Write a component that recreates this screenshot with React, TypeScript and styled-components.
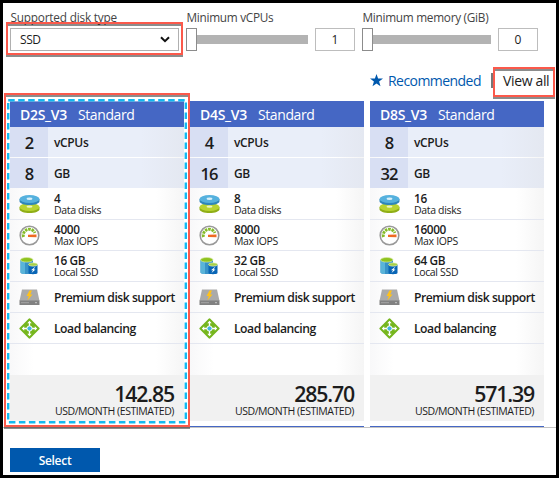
import React from "react";
import styled, { createGlobalStyle } from "styled-components";

const Global = createGlobalStyle`
  * { box-sizing: border-box; }
  body { margin: 0; background: #fff; }
`;

const Page = styled.div`
  position: relative;
  width: 559px;
  height: 478px;
  border: 3px solid #000;
  background: #fff;
  color: #1c1c1c;
  font-family: "Open Sans", "Noto Sans", sans-serif;
  display: flex;
  flex-direction: column;
  overflow: hidden;
  white-space: nowrap;
`;

const Filters = styled.div`
  display: flex;
  gap: 7px;
  padding: 5px 0 0 7px;
  height: 48px;
  flex: none;
`;

const Field = styled.div<{ $width: number }>`
  width: ${(p) => p.$width}px;
  flex: none;
`;

const Label = styled.div<{ $spacing: number }>`
  height: 20px;
  line-height: 18px;
  font-size: 11.8px;
  letter-spacing: ${(p) => p.$spacing}px;
  color: #444;
  padding-left: 0.5px;
`;

const Select = styled.div`
  height: 23px;
  border: 1px solid #b0b0b0;
  display: flex;
  align-items: center;
  justify-content: space-between;
  padding: 0 8px 0 9px;
  font-size: 12px;
  letter-spacing: -0.4px;
`;

const SliderRow = styled.div`
  display: flex;
  align-items: center;
  height: 23px;
`;

const Handle = styled.div`
  width: 11px;
  height: 23px;
  border: 1px solid #8c8c8c;
  background: #fff;
`;

const Track = styled.div`
  flex: 1;
  height: 9px;
  background: #b3b3b3;
`;

const NumberBox = styled.div`
  width: 40px;
  height: 23px;
  margin-left: 7px;
  border: 1px solid #bdbdbd;
  font-size: 12px;
  line-height: 22px;
  text-align: center;
`;

const Links = styled.div`
  display: flex;
  align-items: center;
  height: 50px;
  flex: none;
  padding: 8px 4px 0 367px;
`;

const Recommended = styled.span`
  width: 103px;
  margin-left: 5px;
  font-size: 14px;
  letter-spacing: -0.55px;
  color: #0058ad;
`;

const Divider = styled.span`
  width: 2px;
  height: 15px;
  background: #777;
  margin-right: 10px;
`;

const ViewAll = styled.span`
  font-size: 14px;
  letter-spacing: -0.35px;
`;

const Cards = styled.div`
  display: flex;
  gap: 6px;
  padding-left: 7px;
  height: 325px;
  flex: none;
`;

const Card = styled.div`
  width: 174px;
  height: 320px;
  background: linear-gradient(90deg, #f8f8f9, #fff 14%, #fff 84%, #f5f5f5);
`;

const CardHeader = styled.div`
  height: 26px;
  display: flex;
  align-items: center;
  padding: 0 0 0 10px;
  background: #4567c4;
  color: #fff;
  font-size: 14px;
`;

const SizeName = styled.span`
  width: 58px;
  font-weight: 600;
  letter-spacing: -0.3px;
`;

const Tier = styled.span`
  letter-spacing: -0.4px;
  font-weight: 500;
`;

const Spec = styled.div`
  display: flex;
  height: 30px;
  margin-bottom: 1px;
  background: linear-gradient(90deg, #e9eef9 75%, #e4e8f1);
`;

const SpecValue = styled.div`
  width: 38px;
  background: #d8dff3;
  text-align: center;
  line-height: 32px;
  font-size: 16.5px;
  font-weight: 600;
  letter-spacing: -0.9px;
`;

const SpecUnit = styled.div`
  padding-left: 6px;
  line-height: 32px;
  font-size: 12px;
  font-weight: 600;
  letter-spacing: -0.35px;
`;

const Feature = styled.div`
  display: flex;
  align-items: center;
  height: 31px;
  border-bottom: 1px solid #e4e7f0;
`;

const Features = styled.div`
  height: 156px;
`;

const IconCell = styled.div`
  width: 44px;
  padding-left: 9px;
  display: flex;
`;

const FeatureText = styled.div`
  display: flex;
  flex-direction: column;
`;

const Amount = styled.span`
  font-size: 11.8px;
  font-weight: 600;
  line-height: 12px;
  letter-spacing: -0.35px;
`;

const Caption = styled.span`
  font-size: 10.5px;
  line-height: 12px;
  letter-spacing: -0.33px;
`;

const FeatureName = styled.span`
  font-size: 12.2px;
  font-weight: 600;
  letter-spacing: -0.5px;
`;

const Spacer = styled.div`
  height: 30px;
`;

const Price = styled.div`
  height: 46px;
  padding: 8px 10px 0 0;
  background: #f1f1f1;
  text-align: right;
`;

const Cost = styled.div`
  font-size: 21.3px;
  font-weight: 600;
  line-height: 22px;
  letter-spacing: -1.15px;
`;

const Period = styled.div`
  font-size: 10.5px;
  line-height: 12px;
  letter-spacing: -0.45px;
`;

const NextRow = styled.div`
  display: flex;
  gap: 6px;
  padding-left: 7px;
  height: 2px;
  flex: none;
  border-bottom: 1px solid #c4c4c4;
`;

const NextCard = styled.div`
  width: 174px;
  height: 1px;
  background: #4567c4;
`;

const SelectButton = styled.button`
  width: 90px;
  height: 24px;
  margin: 20px 0 0 7px;
  padding: 0;
  border: 0;
  background: #0058ad;
  color: #fff;
  font: 600 12px "Open Sans", "Noto Sans", sans-serif;
  letter-spacing: -0.3px;
`;

const Highlight = styled.div<{ $x: number; $y: number; $w: number; $h: number }>`
  position: absolute;
  left: ${(p) => p.$x - 3}px;
  top: ${(p) => p.$y - 3}px;
  width: ${(p) => p.$w}px;
  height: ${(p) => p.$h}px;
  border: 2px solid #fb594b;
  filter: drop-shadow(0 2.5px 0.4px rgba(0, 0, 0, 0.45));
  pointer-events: none;
`;

const Selection = styled.svg`
  position: absolute;
  left: 4px;
  top: 96px;
  pointer-events: none;
`;

const Chevron = () => (
  <svg width="10" height="7" viewBox="0 0 10 7">
    <path d="M1 1.2 5 5.2 9 1.2" fill="none" stroke="#111" strokeWidth="2" />
  </svg>
);

const Star = () => (
  <svg width="13" height="13" viewBox="0 0 13 13">
    <path d="M6.5 0 8.1 4.6H13L9.1 7.5 10.5 12.3 6.5 9.4 2.5 12.3 3.9 7.5 0 4.6H4.9Z" fill="#0058ad" />
  </svg>
);

const DisksIcon = () => (
  <svg width="21" height="20" viewBox="0 0 21 20">
    <path d="M.5 13v2.2C.5 17.3 5 19 10.5 19s10-1.7 10-3.8V13Z" fill="#8fae17" />
    <ellipse cx="10.5" cy="13" rx="10" ry="4" fill="#b8d432" />
    <ellipse cx="10.5" cy="12.7" rx="3" ry="1.1" fill="#edf3c4" />
    <path d="M.5 5v2.2C.5 9.3 5 11 10.5 11s10-1.7 10-3.8V5Z" fill="#2f86bb" />
    <ellipse cx="10.5" cy="5" rx="10" ry="4" fill="#55b1de" />
    <ellipse cx="10.5" cy="4.8" rx="3" ry="1.2" fill="#d9eff8" />
  </svg>
);

const GaugeIcon = () => (
  <svg width="21" height="21" viewBox="0 0 21 21">
    <circle cx="10.5" cy="10.5" r="9.3" fill="#fff" stroke="#999" strokeWidth="1.6" />
    <path d="M4.5 12A6 6 0 0 1 15.8 8" fill="none" stroke="#85bc28" strokeWidth="3" strokeDasharray="2.5 .8" />
    <path d="M9 9.7 17.5 9.5V12.3L9 12Z" fill="#ef6a22" />
  </svg>
);

const StorageIcon = () => (
  <svg width="21" height="20" viewBox="0 0 21 20">
    <path d="M1.500 4v12.500c0 2 12.500 2 12.500 0V4Z" fill="#3993c8" />
    <path d="M1.500 4v12.500c0 .8 2 1.300 4.500 1.500V4Z" fill="#59b4d9" />
    <ellipse cx="7.750" cy="3.8" rx="6.200" ry="2.3" fill="#8fc31f" stroke="#d6e8a0" strokeWidth=".7" />
    <path d="M9.5 8.5v8.500c0 1.6 9 1.6 9 0v-8.500Z" fill="#0865b5" />
    <ellipse cx="14" cy="8.5" rx="4.5" ry="1.7" fill="#a7d047" stroke="#e4f0ca" strokeWidth=".6" />
    <path d="m16.5 10.5-4.5 3.8h2L12.5 17l4-3.5h-1.8Z" fill="#fff" />
  </svg>
);

const PremiumIcon = () => (
  <svg width="21" height="17" viewBox="0 0 21 17">
    <path d="M3 .5h15L20.5 12H.5Z" fill="#aaa" />
    <path d="M.5 11.5h20V16H.5Z" fill="#818181" />
    <path d="M2.5 13.7h8" stroke="#c8c8c8" strokeDasharray="1 1" />
    <path d="M16 13.7h2" stroke="#c8c8c8" />
    <path d="M10.5 1.5 7.5 7h2.3L8.3 11.5 13.5 5.5h-2.3L13 1.5Z" fill="#ffc21a" />
  </svg>
);

const BalanceIcon = () => (
  <svg width="21" height="21" viewBox="0 0 21 21">
    <rect x="3" y="3" width="15" height="15" rx="1.2" transform="rotate(45 10.5 10.5)" fill="#76b61e" />
    <path d="M10.5 4v13M4 10.5h13" stroke="#fff" strokeWidth="1.3" />
    <path d="M8.3 5.2 10.5 2.8 12.7 5.2ZM8.3 15.8 10.5 18.2 12.7 15.8ZM5.2 8.3 2.8 10.5 5.2 12.7ZM15.8 8.3 18.2 10.5 15.8 12.7Z" fill="#fff" />
    <circle cx="10.5" cy="10.5" r="2.6" fill="#41b5df" stroke="#fff" strokeWidth="1" />
  </svg>
);

const sizes = [
  { name: "D2S_V3", cpu: "2", memory: "8", disks: "4", iops: "4000", ssd: "16 GB", cost: "142.85" },
  { name: "D4S_V3", cpu: "4", memory: "16", disks: "8", iops: "8000", ssd: "32 GB", cost: "285.70" },
  { name: "D8S_V3", cpu: "8", memory: "32", disks: "16", iops: "16000", ssd: "64 GB", cost: "571.39" },
];

const Detail = ({ icon, amount, caption }: { icon: React.ReactNode; amount: string; caption: string }) => (
  <Feature>
    <IconCell>{icon}</IconCell>
    <FeatureText>
      <Amount>{amount}</Amount>
      <Caption>{caption}</Caption>
    </FeatureText>
  </Feature>
);

const SizeCard = ({ size }: { size: (typeof sizes)[number] }) => (
  <Card>
    <CardHeader>
      <SizeName>{size.name}</SizeName>
      <Tier>Standard</Tier>
    </CardHeader>
    <Spec>
      <SpecValue>{size.cpu}</SpecValue>
      <SpecUnit>vCPUs</SpecUnit>
    </Spec>
    <Spec>
      <SpecValue>{size.memory}</SpecValue>
      <SpecUnit>GB</SpecUnit>
    </Spec>
    <Features>
      <Detail icon={<DisksIcon />} amount={size.disks} caption="Data disks" />
      <Detail icon={<GaugeIcon />} amount={size.iops} caption="Max IOPS" />
      <Detail icon={<StorageIcon />} amount={size.ssd} caption="Local SSD" />
      <Feature>
        <IconCell><PremiumIcon /></IconCell>
        <FeatureName>Premium disk support</FeatureName>
      </Feature>
      <Feature>
        <IconCell><BalanceIcon /></IconCell>
        <FeatureName>Load balancing</FeatureName>
      </Feature>
    </Features>
    <Spacer />
    <Price>
      <Cost>{size.cost}</Cost>
      <Period>USD/MONTH (ESTIMATED)</Period>
    </Price>
  </Card>
);

export default function App() {
  return (
    <Page>
      <Global />
      <Filters>
        <Field $width={169}>
          <Label $spacing={-0.2}>Supported disk type</Label>
          <Select>SSD<Chevron /></Select>
        </Field>
        <Field $width={169}>
          <Label $spacing={-0.28}>Minimum vCPUs</Label>
          <SliderRow><Handle /><Track /><NumberBox>1</NumberBox></SliderRow>
        </Field>
        <Field $width={176}>
          <Label $spacing={-0.28}>Minimum memory (GiB)</Label>
          <SliderRow><Handle /><Track /><NumberBox>0</NumberBox></SliderRow>
        </Field>
      </Filters>
      <Links>
        <Star />
        <Recommended>Recommended</Recommended>
        <Divider />
        <ViewAll>View all</ViewAll>
      </Links>
      <Cards>
        {sizes.map((size) => <SizeCard key={size.name} size={size} />)}
      </Cards>
      <NextRow><NextCard /><NextCard /><NextCard /></NextRow>
      <SelectButton>Select</SelectButton>
      <Highlight $x={6} $y={22} $w={177} $h={33} />
      <Highlight $x={493} $y={67} $w={62} $h={30} />
      <Highlight $x={4} $y={93} $w={186} $h={334} />
      <Selection width="180" height="325" viewBox="0 0 180 325">
        <rect x="1.2" y="1.2" width="177.6" height="322" fill="none" stroke="#fff" strokeWidth="2.4" />
        <rect x="1.2" y="1.2" width="177.6" height="322" fill="none" stroke="#14b9f1" strokeWidth="2.4" strokeDasharray="6.5 3.5" />
      </Selection>
    </Page>
  );
}
